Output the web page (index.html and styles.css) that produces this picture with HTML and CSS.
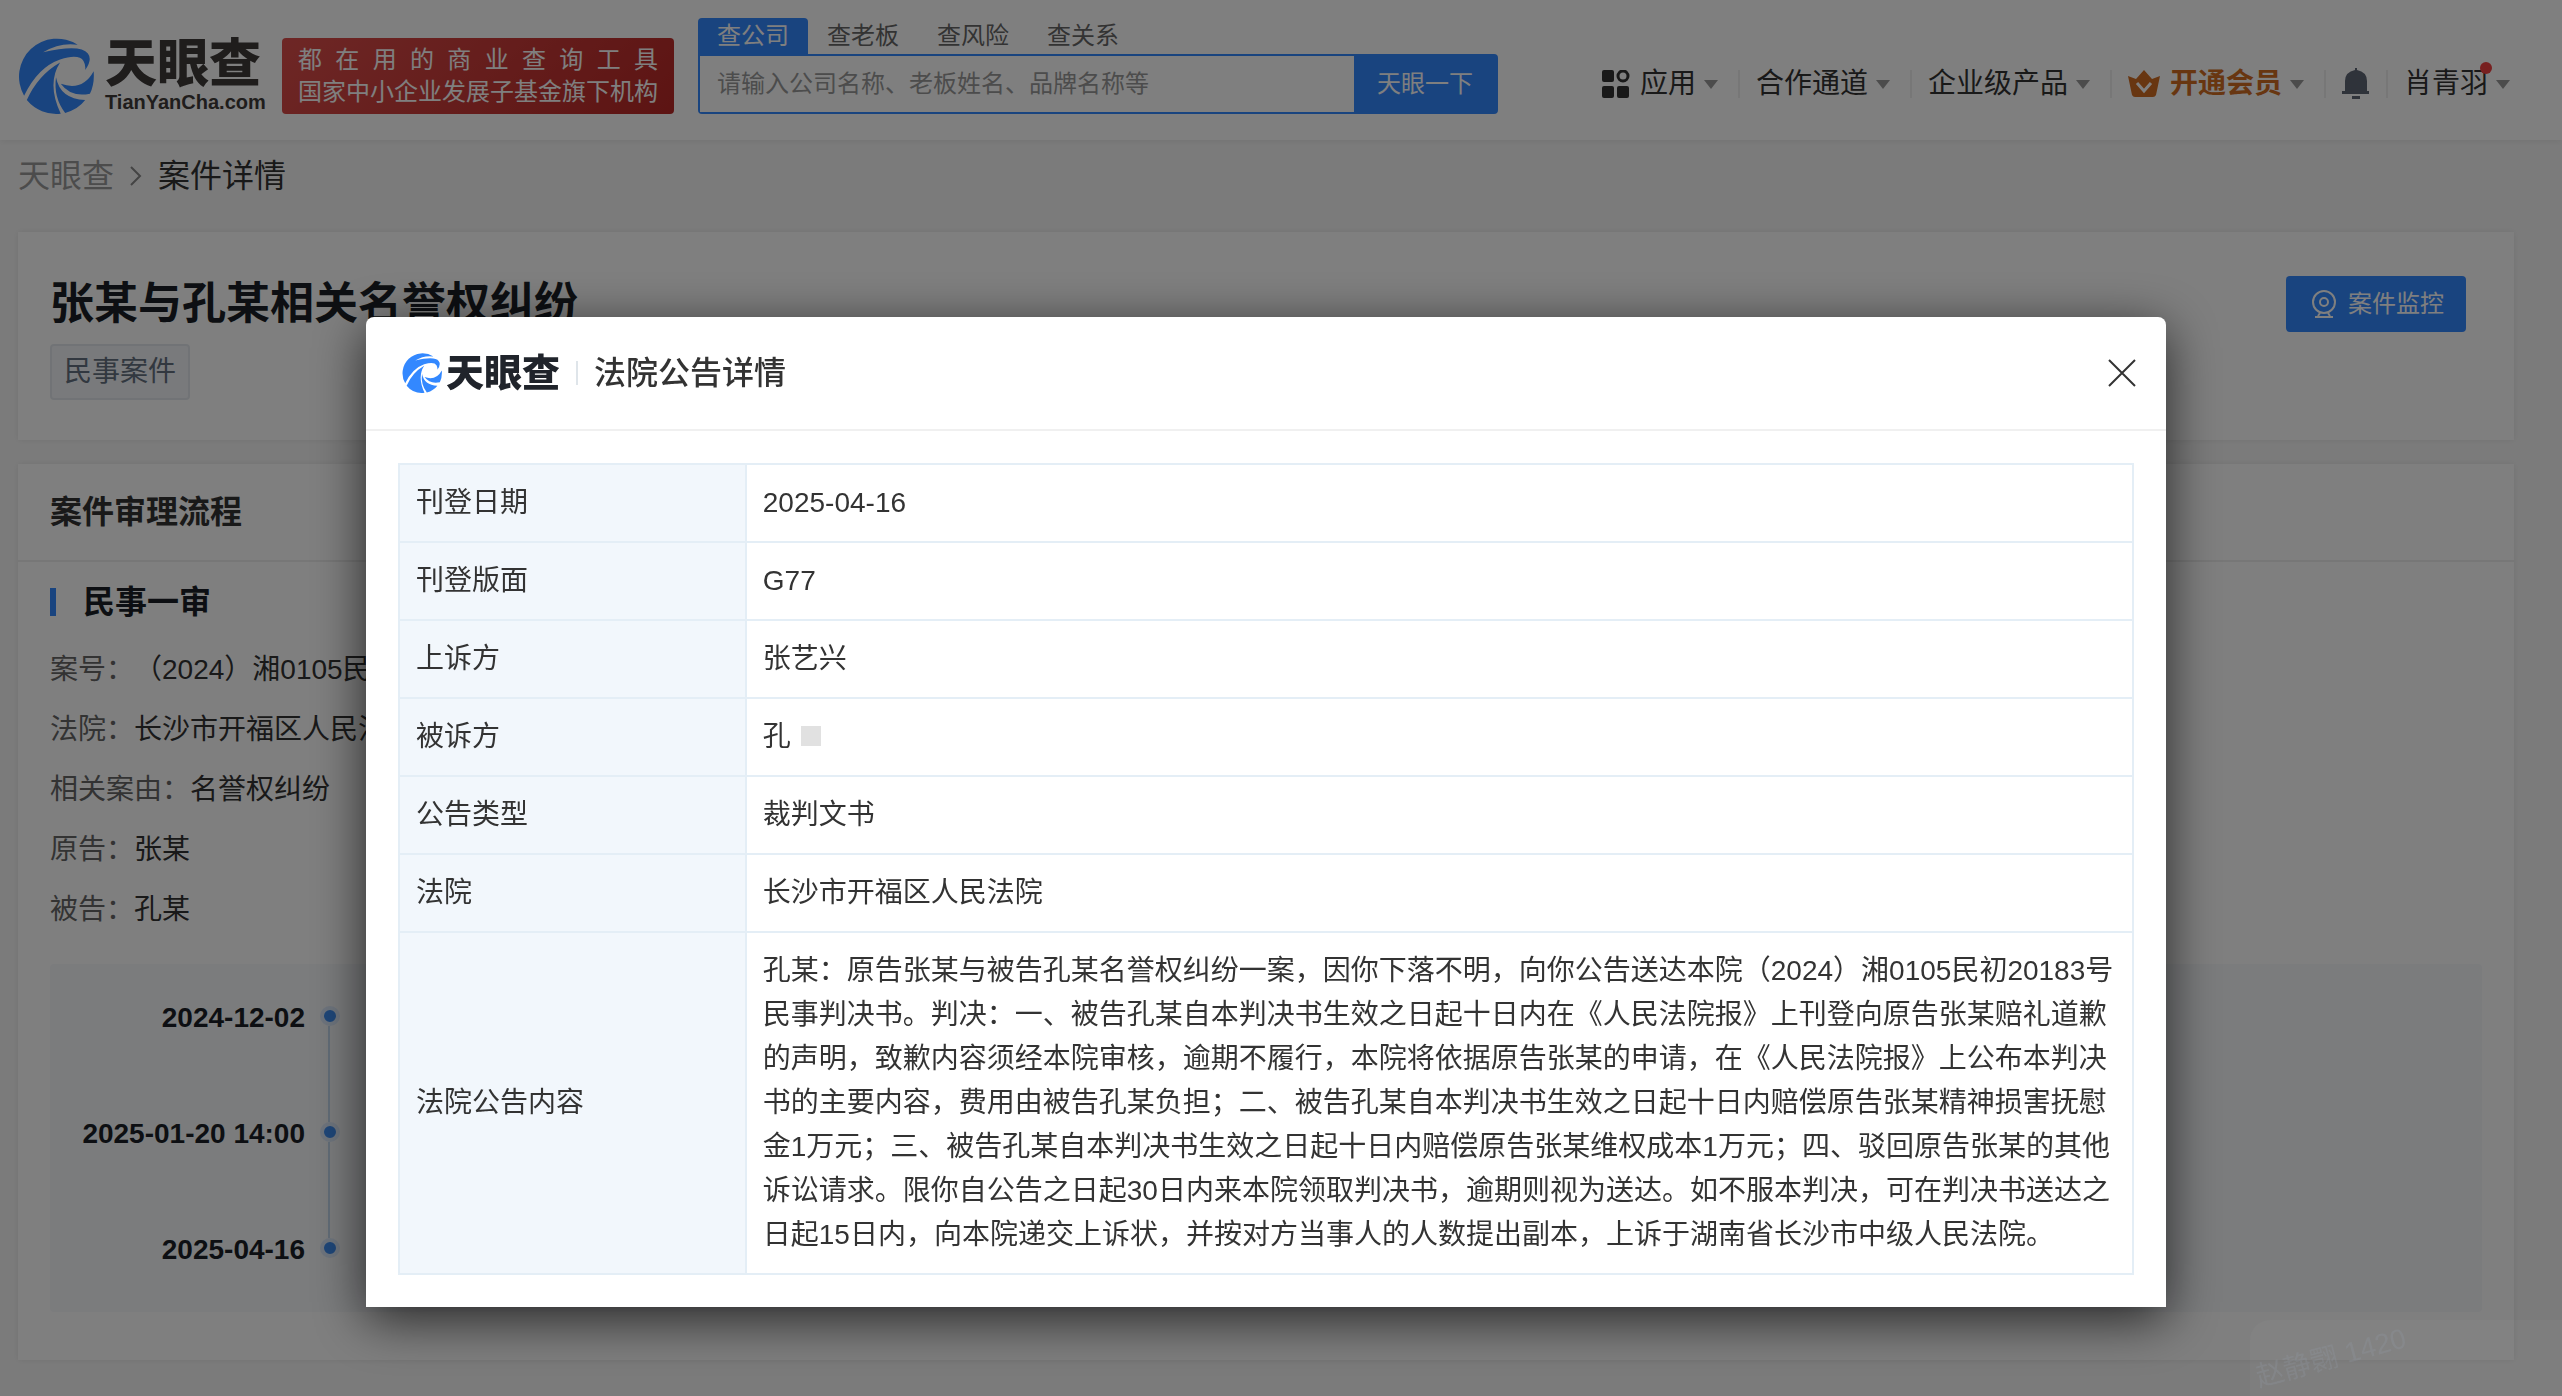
FILE: index.html
```
<!DOCTYPE html>
<html lang="zh-CN">
  <head>
    <meta charset="UTF-8" />
    <meta name="viewport" content="width=device-width, initial-scale=1" />
    <title>案件详情 - 天眼查</title>
    <link rel="stylesheet" href="styles.css">
  </head>
  <body>
    <!-- logo symbol, used in the header and in the dialog -->
    <svg class="symbols" width="0" height="0" aria-hidden="true">
      <symbol id="swirl" viewBox="26 56 224 224">
        <path d="M202 76 A112 112 0 0 0 44 226 Q84 142 150 119 Q206 102 219 124 Q226 136 224 150 Q246 120 232 102 Q210 72 100 98 Q150 68 202 76Z" />
        <path d="M52 239 Q84 166 150 128 Q110 190 152 279 A112 112 0 0 1 52 239Z" />
        <path d="M138 172 Q150 236 224 239 Q204 266 165 277 Q130 232 138 172Z" />
        <path d="M152 191 Q216 214 249 154 Q252 192 238 220 Q182 232 152 191Z" />
      </symbol>
    </svg>

    <header class="header">
      <a class="logo" href="#" aria-label="天眼查">
        <svg class="logo-mark" aria-hidden="true"><use href="#swirl" /></svg>
        <span class="logo-text">
          <span class="logo-cn">天眼查</span>
          <span class="logo-en">TianYanCha.com</span>
        </span>
      </a>
      <div class="slogan">
        <div class="slogan-wide">都 在 用 的 商 业 查 询 工 具</div>
        <div>国家中小企业发展子基金旗下机构</div>
      </div>
      <form class="search">
        <div class="search-tabs">
          <button type="button" class="tab active">查公司</button>
          <button type="button" class="tab">查老板</button>
          <button type="button" class="tab">查风险</button>
          <button type="button" class="tab">查关系</button>
        </div>
        <div class="search-box">
          <input type="text" aria-label="搜索" placeholder="请输入公司名称、老板姓名、品牌名称等" />
          <button type="button" class="search-btn">天眼一下</button>
        </div>
      </form>
      <nav class="nav">
        <a class="nav-item" href="#">
          <svg class="icon-apps" viewBox="0 0 28 28" aria-hidden="true">
            <rect x="0" y="0" width="12" height="12" rx="2" />
            <rect x="0" y="16" width="12" height="12" rx="2" />
            <rect x="15" y="16" width="12" height="12" rx="2" />
            <circle cx="21" cy="6" r="5" fill="none" stroke="#333" stroke-width="3" />
          </svg>
          应用<i class="caret"></i>
        </a>
        <a class="nav-item" href="#">合作通道<i class="caret"></i></a>
        <a class="nav-item" href="#">企业级产品<i class="caret"></i></a>
        <a class="nav-item vip" href="#">
          <svg class="icon-crown" viewBox="0 0 32 28" aria-hidden="true">
            <path d="M0 6 L8 9 L16 0 L24 9 L32 6 L28 25 Q27 27 25 27 L7 27 Q5 27 4 25Z" fill="#d06c22" />
            <path d="M9 13 L16 21 L23 13" fill="none" stroke="#fff" stroke-width="3" />
          </svg>
          开通会员<i class="caret"></i>
        </a>
        <a class="nav-item bell" href="#" aria-label="消息">
          <svg class="icon-bell" viewBox="0 0 28 32" aria-hidden="true">
            <path d="M13 0 h2 v2 Q25 4 25 13 V23 H27 V26 H0 V23 H3 V13 Q3 4 13 2Z" />
            <rect x="10" y="28" width="8" height="3" />
          </svg>
        </a>
        <a class="nav-item user" href="#"><span class="user-name">肖青羽</span><i class="caret"></i></a>
      </nav>
    </header>

    <main class="page">
      <nav class="crumbs">
        <a href="#">天眼查</a>
        <svg viewBox="0 0 12 20" aria-hidden="true"><path d="M1 1 L10 10 L1 19" /></svg>
        <span>案件详情</span>
      </nav>

      <section class="card case-head">
        <div>
          <h1>张某与孔某相关名誉权纠纷</h1>
          <span class="tag">民事案件</span>
        </div>
        <button class="monitor-btn">
          <svg viewBox="0 0 24 28" aria-hidden="true">
            <circle cx="12" cy="12" r="11" />
            <circle cx="12" cy="12" r="4" />
            <path d="M8 23 L6 26 M16 23 L18 26 M3 27 H21" />
          </svg>
          案件监控
        </button>
      </section>

      <section class="card">
        <h2>案件审理流程</h2>
        <div class="process">
          <h3>民事一审</h3>
          <ul class="facts">
            <li><span>案号：</span>（2024）湘0105民初20183号</li>
            <li><span>法院：</span>长沙市开福区人民法院</li>
            <li><span>相关案由：</span>名誉权纠纷</li>
            <li><span>原告：</span>张某</li>
            <li><span>被告：</span>孔某</li>
          </ul>
          <ol class="timeline">
            <li><time>2024-12-02</time><i class="dot"></i></li>
            <li><time>2025-01-20 14:00</time><i class="dot"></i></li>
            <li><time>2025-04-16</time><i class="dot"></i></li>
          </ol>
        </div>
      </section>
    </main>

    <div class="overlay">
      <div class="dialog" role="dialog" aria-modal="true" aria-labelledby="dialogTitle">
        <div class="dialog-head">
          <svg class="dialog-mark" aria-hidden="true"><use href="#swirl" /></svg>
          <span class="dialog-brand">天眼查</span>
          <h2 id="dialogTitle">法院公告详情</h2>
          <button class="close" aria-label="关闭">
            <svg viewBox="0 0 28 28" aria-hidden="true"><path d="M1 1 L27 27 M27 1 L1 27" /></svg>
          </button>
        </div>
        <div class="dialog-body">
          <table>
            <tr><th scope="row">刊登日期</th><td>2025-04-16</td></tr>
            <tr><th scope="row">刊登版面</th><td>G77</td></tr>
            <tr><th scope="row">上诉方</th><td>张艺兴</td></tr>
            <tr><th scope="row">被诉方</th><td>孔<span class="mask"></span></td></tr>
            <tr><th scope="row">公告类型</th><td>裁判文书</td></tr>
            <tr><th scope="row">法院</th><td>长沙市开福区人民法院</td></tr>
            <tr>
              <th scope="row">法院公告内容</th>
              <td>孔某：原告张某与被告孔某名誉权纠纷一案，因你下落不明，向你公告送达本院（2024）湘0105民初20183号民事判决书。判决：一、被告孔某自本判决书生效之日起十日内在《人民法院报》上刊登向原告张某赔礼道歉的声明，致歉内容须经本院审核，逾期不履行，本院将依据原告张某的申请，在《人民法院报》上公布本判决书的主要内容，费用由被告孔某负担；二、被告孔某自本判决书生效之日起十日内赔偿原告张某精神损害抚慰金1万元；三、被告孔某自本判决书生效之日起十日内赔偿原告张某维权成本1万元；四、驳回原告张某的其他诉讼请求。限你自公告之日起30日内来本院领取判决书，逾期则视为送达。如不服本判决，可在判决书送达之日起15日内，向本院递交上诉状，并按对方当事人的人数提出副本，上诉于湖南省长沙市中级人民法院。</td>
            </tr>
          </table>
        </div>
      </div>
      <div class="watermark"><span>赵静翾 1420</span></div>
    </div>
  </body>
</html>
```

FILE: styles.css
```
* {
  box-sizing: border-box;
}

body {
  margin: 0;
  min-height: 100vh;
  background: #f7f7f7;
  color: #333;
  font-family: "Liberation Sans", "Noto Sans CJK SC", sans-serif;
  font-size: 28px;
  line-height: 44px;
  text-spacing-trim: space-all;
}

a {
  color: inherit;
  text-decoration: none;
}

button,
input {
  font: inherit;
  border: none;
  margin: 0;
  padding: 0;
}

h1,
h2,
h3,
ul,
ol {
  margin: 0;
  padding: 0;
  list-style: none;
}

svg {
  display: block;
  flex: none;
}

.symbols {
  position: absolute;
}

/* header */
.header {
  display: flex;
  align-items: flex-end;
  height: 140px;
  padding: 0 52px 26px 18px;
  background: #fff;
  box-shadow: 0 2px 6px rgba(0, 0, 0, 0.06);
}

.logo {
  display: flex;
  align-items: center;
  gap: 11px;
}

.logo-mark {
  width: 76px;
  height: 76px;
  fill: #38f;
}

.logo-text {
  display: flex;
  flex-direction: column;
  width: 160px;
  color: #3e3a39;
}

.logo-cn {
  font-size: 52px;
  font-weight: 900;
  line-height: 52px;
}

.logo-en {
  font-size: 20px;
  font-weight: bold;
  line-height: 24px;
}

.slogan {
  flex: none;
  margin-left: 17px;
  padding: 6px 16px;
  border-radius: 4px;
  background: linear-gradient(135deg, #dc4e4b, #b92826);
  color: #fff;
  font-size: 24px;
  line-height: 32px;
}

.slogan-wide {
  text-align-last: justify;
}

.search {
  flex: none;
  width: 800px;
  margin-left: 24px;
  font-size: 24px;
}

.search-tabs {
  display: flex;
}

.tab {
  width: 110px;
  height: 36px;
  line-height: 36px;
  background: none;
  color: #666;
}

.tab.active {
  background: #38f;
  color: #fff;
  border-radius: 4px 4px 0 0;
}

.search-box {
  display: flex;
  height: 60px;
  border: 2px solid #38f;
  border-radius: 0 4px 4px 4px;
  background: #38f;
}

.search-box input {
  flex: 1;
  padding: 0 17px;
  background: #fff;
  outline: none;
}

.search-box input::placeholder {
  color: #999;
  opacity: 1;
}

.search-btn {
  width: 142px;
  background: #38f;
  color: #fff;
}

.nav {
  display: flex;
  align-items: center;
  height: 60px;
  margin-left: auto;
}

.nav-item {
  display: flex;
  align-items: center;
  height: 28px;
  padding: 0 20px 0 16px;
  border-right: 2px solid #eee;
  white-space: nowrap;
}

.nav-item:last-child {
  padding-right: 0;
  border-right: none;
}

.nav-item.vip {
  color: #d06c22;
  font-weight: bold;
}

.nav-item.bell {
  padding-right: 16px;
}

.caret {
  margin-left: 8px;
  border: 7px solid transparent;
  border-top: 9px solid #999;
  border-bottom: none;
}

.icon-apps {
  width: 28px;
  height: 28px;
  margin-right: 10px;
  fill: #333;
}

.icon-crown {
  width: 32px;
  height: 28px;
  margin-right: 10px;
}

.icon-bell {
  width: 28px;
  height: 32px;
  fill: #5f6775;
}

.user-name {
  position: relative;
}

.user-name::after {
  content: "";
  position: absolute;
  top: 0;
  right: -4px;
  width: 12px;
  height: 12px;
  border-radius: 50%;
  background: #f04040;
}

/* page */
.page {
  padding: 0 48px 36px 18px;
}

.crumbs {
  display: flex;
  align-items: center;
  gap: 16px;
  padding: 12px 0 32px;
  font-size: 32px;
  line-height: 48px;
}

.crumbs a {
  color: #999;
}

.crumbs svg {
  width: 12px;
  height: 20px;
  fill: none;
  stroke: #888;
  stroke-width: 2;
}

.card {
  margin-bottom: 24px;
  background: #fff;
  box-shadow: 0 0 6px rgba(0, 0, 0, 0.08);
}

.card:last-child {
  margin-bottom: 0;
}

.case-head {
  display: flex;
  justify-content: space-between;
  align-items: flex-start;
  padding: 44px 48px 40px 32px;
}

h1 {
  margin-bottom: 12px;
  color: #1b1f26;
  font-size: 44px;
  line-height: 56px;
}

.tag {
  display: inline-block;
  padding: 4px 12px;
  border: 2px solid #e3e7ec;
  border-radius: 4px;
  background: #f3f5f8;
  color: #647080;
  line-height: 44px;
}

.monitor-btn {
  display: flex;
  align-items: center;
  gap: 12px;
  height: 56px;
  padding: 0 22px 0 26px;
  border-radius: 4px;
  background: #38f;
  color: #fff;
  font-size: 24px;
}

.monitor-btn svg {
  width: 24px;
  height: 28px;
  fill: none;
  stroke: #fff;
  stroke-width: 2;
}

.card h2 {
  padding: 24px 32px;
  border-bottom: 2px solid #eee;
  font-size: 32px;
  line-height: 48px;
}

.process {
  padding: 16px 32px 48px;
}

h3 {
  display: flex;
  align-items: center;
  margin-bottom: 14px;
  color: #1b1f26;
  font-size: 32px;
  line-height: 48px;
}

h3::before {
  content: "";
  width: 6px;
  height: 28px;
  margin-right: 27px;
  background: #38f;
}

.facts {
  margin-bottom: 24px;
  line-height: 60px;
}

.facts span {
  color: #666;
}

.timeline {
  border-radius: 4px;
  background: #f6f8fb;
}

.timeline li {
  display: flex;
  height: 116px;
  padding-top: 32px;
}

.timeline time {
  width: 255px;
  color: #1b1f26;
  font-weight: bold;
  text-align: right;
}

.dot {
  position: relative;
  width: 20px;
  height: 20px;
  margin: 10px 0 0 15px;
  border: 4px solid #dce9fa;
  border-radius: 50%;
  background: #3d8cf0;
}

/* line down to the next dot */
.timeline li:not(:last-child) .dot::after {
  content: "";
  position: absolute;
  top: 16px;
  left: 4px;
  width: 2px;
  height: 96px;
  background: #c5d9ee;
}

/* dialog */
.overlay {
  position: fixed;
  inset: 0;
  padding: 317px 30px 0 0;
  background: rgba(0, 0, 0, 0.5);
}

.dialog {
  max-width: 1800px;
  margin: 0 auto;
  border-radius: 8px 8px 0 0;
  background: #fff;
  box-shadow: 0 12px 52px rgba(0, 0, 0, 0.7);
}

.dialog-head {
  display: flex;
  align-items: center;
  padding: 32px 30px 32px 36px;
  border-bottom: 2px solid #f0f0f0;
}

.dialog-mark {
  width: 40px;
  height: 40px;
  fill: #38f;
}

.dialog-brand {
  margin-left: 4px;
  color: #20242b;
  font-size: 38px;
  font-weight: 900;
  line-height: 48px;
}

.dialog-head h2 {
  display: flex;
  align-items: center;
  font-size: 32px;
  font-weight: 500;
  line-height: 48px;
}

.dialog-head h2::before {
  content: "";
  width: 2px;
  height: 24px;
  margin: 0 16px;
  background: #dfe5ea;
}

.close {
  margin-left: auto;
  background: none;
}

.close svg {
  width: 28px;
  height: 28px;
  fill: none;
  stroke: #333;
  stroke-width: 2;
}

.dialog-body {
  padding: 32px;
}

table {
  width: 100%;
  border-collapse: collapse;
  table-layout: fixed;
}

th,
td {
  padding: 16px;
  border: 2px solid #e4eef6;
  font-weight: normal;
  text-align: left;
}

th {
  width: 20%;
  background: #f2f7fc;
}

.mask {
  display: inline-block;
  width: 20px;
  height: 20px;
  margin-left: 10px;
  background: #e1e1e1;
}

.watermark {
  position: absolute;
  right: 0;
  bottom: 0;
  width: 312px;
  height: 76px;
  padding: 16px 4px;
  border-radius: 20px 0 0 0;
  background: rgba(255, 255, 255, 0.02);
  color: rgba(150, 160, 175, 0.2);
  overflow: hidden;
}

.watermark span {
  display: inline-block;
  transform: rotate(-15deg);
}
```
